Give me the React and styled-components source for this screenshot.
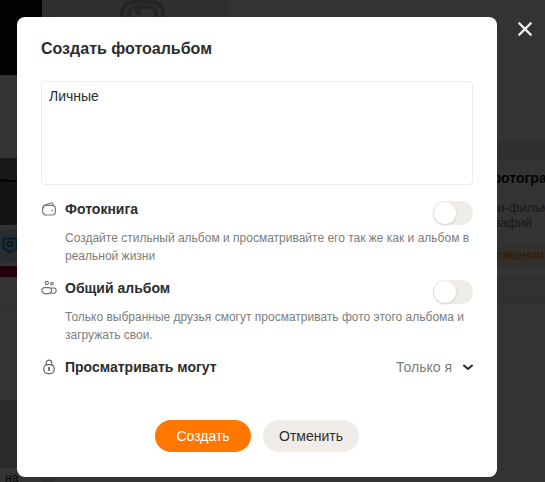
import React from "react";
import styled, { createGlobalStyle } from "styled-components";

const Global = createGlobalStyle`
  html, body {
    margin: 0;
    padding: 0;
    height: 100%;
    overflow: hidden;
    background: #fff;
    font-family: "Liberation Sans", Arial, sans-serif;
  }
  * { box-sizing: border-box; }
`;

const WalletIcon = () => (
  <svg width="16" height="16" viewBox="0 0 16 16" fill="none" stroke="#7d7d7d" strokeWidth="1.2">
    <path d="M2 7.5C2 5.5 2.6 4.6 4 4.1L10 2C11.2 1.6 12 2.3 12 3.4V4.4" />
    <rect x="1.6" y="4.4" width="12.8" height="9.6" rx="3.4" />
    <circle cx="11.2" cy="9.6" r="0.8" fill="#7d7d7d" stroke="none" />
  </svg>
);

const PeopleIcon = () => (
  <svg width="16" height="16" viewBox="0 0 16 16" fill="none" stroke="#6f6f6f" strokeWidth="1.1">
    <circle cx="5.8" cy="3" r="1.6" />
    <circle cx="11" cy="3.6" r="1.3" />
    <rect x="0.8" y="7.6" width="9.8" height="6" rx="3" />
    <path d="M10 8H12.6C14.2 8 15.2 9.2 15.2 10.6C15.2 12.1 14.2 13.2 12.6 13.2H9.4" />
  </svg>
);

const LockIcon = () => (
  <svg width="16" height="16" viewBox="0 0 16 16" fill="none" stroke="#666" strokeWidth="1.2">
    <path d="M5.2 6.6V4C5.2 2.4 6.4 1.2 8 1.2C9.6 1.2 10.8 2.4 10.8 4V6.6" />
    <rect x="2.8" y="5.6" width="10.4" height="9" rx="4" />
    <path d="M8 8.6V11" strokeLinecap="round" strokeWidth="1.8" />
  </svg>
);

const Chevron = () => (
  <svg width="10" height="7" viewBox="0 0 10 7" fill="none" stroke="#2c2d2e" strokeWidth="2" strokeLinecap="round" strokeLinejoin="round">
    <path d="M1 1.6L5 5L9 1.6" />
  </svg>
);

const CloseIcon = () => (
  <svg width="16" height="16" viewBox="0 0 16 16" fill="none" stroke="#eee" strokeWidth="2.2">
    <path d="M1.6 1.6L14.4 14.4M14.4 1.6L1.6 14.4" />
  </svg>
);

const StubIcon = () => (
  <svg width="45" height="30" viewBox="0 0 45 30" fill="none" stroke="#b9b7b4" strokeWidth="4">
    <rect x="2" y="2" width="41" height="44" rx="11" />
    <rect x="9" y="7" width="27" height="30" rx="6" />
    <circle cx="18" cy="12" r="3" fill="#b9b7b4" stroke="none" />
  </svg>
);

const BubbleIcon = () => (
  <svg width="16" height="18" viewBox="0 0 16 18" fill="none" stroke="#1a8fd0" strokeWidth="2">
    <path d="M3 1.5H13C14 1.5 14.5 2 14.5 3V11C14.5 12 14 12.5 13 12.5H11L8 16L5 12.5H3C2 12.5 1.5 12 1.5 11V3C1.5 2 2 1.5 3 1.5Z" />
    <rect x="5.5" y="5" width="5" height="4" />
  </svg>
);

// страница под затемнением
const Page = styled.div`
  position: relative;
  width: 545px;
  height: 482px;
  overflow: hidden;
  display: grid;
  grid-template-columns: 42px 12px 176px 1fr;
  background: #fff;
`;

const LeftColumn = styled.div`
  display: flex;
  flex-direction: column;
  background: #fff;
`;

const Strip = styled.div`
  height: ${(p) => p.$h}px;
  background: ${(p) => p.$bg};
  border-bottom: ${(p) => (p.$line ? "1px solid #e6e4e1" : "0")};
`;

const PostPhoto = styled.div`
  height: 67px;
  background: linear-gradient(4deg, #666 0 62%, #111 63% 65%, #777 66%);
`;

const AvatarRow = styled.div`
  height: 41px;
  background: #fff;
`;

const Avatar = styled.div`
  width: 34px;
  height: 34px;
  margin: 4px 0 0 -7px;
  border-radius: 50%;
  background: #cfe2ee;
  display: flex;
  align-items: center;
  justify-content: center;
`;

const BottomLabel = styled.span`
  display: block;
  font-size: 12px;
  line-height: 14px;
  color: #2c2d2e;
  padding: 3px 0 0 5px;
`;

const Gap = styled.div`
  background: #e9e7e4;
`;

const MiddleColumn = styled.div`
  display: flex;
  flex-direction: column;
`;

const PhotoStub = styled.div`
  height: 150px;
  background: #efedea;
  display: flex;
  justify-content: center;
`;

const RightColumn = styled.div`
  padding-top: 140px;
  display: flex;
  flex-direction: column;
`;

const CardHead = styled.div`
  height: 18px;
  background: #f0eeeb;
`;

const Card = styled.div`
  height: 120px;
  border-top: 1px solid #e6e4e1;
  border-bottom: 1px solid #e6e4e1;
  overflow: hidden;
  white-space: nowrap;
  display: flex;
  flex-direction: column;
  background: #fff;
`;

const CardTitle = styled.div`
  margin-top: 10px;
  margin-bottom: 13px;
  padding-left: 259px;
  font-size: 14px;
  line-height: 18px;
  font-weight: 700;
  color: #111;
`;

const CardLine = styled.div`
  padding-left: ${(p) => p.$left}px;
  font-size: 13px;
  line-height: 15px;
  color: #7d7d7d;
`;

const CardLink = styled.div`
  margin-top: 16px;
  padding: 0 0 0 240px;
  height: 22px;
  font-size: 13px;
  line-height: 17px;
  color: #ee8208;
  background: #fbeadb;
`;

const CardFooter = styled.div`
  height: 26px;
  background: #f4f2f0;
  border-bottom: 1px solid #e6e4e1;
`;

const Overlay = styled.div`
  position: absolute;
  inset: 0;
  background: rgba(0, 0, 0, 0.8);
`;

const CloseButton = styled.button`
  position: absolute;
  top: 21px;
  left: 517px;
  width: 16px;
  height: 16px;
  padding: 0;
  border: 0;
  background: none;
  display: flex;
`;

const Modal = styled.div`
  position: absolute;
  top: 17px;
  left: 17px;
  width: 480px;
  height: 460px;
  background: #fff;
  border-radius: 8px;
  padding: 22px 24px 25px;
  display: flex;
  flex-direction: column;
`;

const Title = styled.h2`
  margin: 0;
  font-size: 16px;
  line-height: 20px;
  font-weight: 700;
  color: #2c2d2e;
`;

const NameField = styled.div`
  margin-top: 22px;
  height: 104px;
  border: 1px solid #eeecea;
  border-radius: 4px;
  padding: 6px 7px;
  font-size: 14px;
  line-height: 16px;
  color: #2c2d2e;
`;

const Option = styled.div`
  margin-top: ${(p) => p.$top}px;
  display: grid;
  grid-template-columns: 24px 1fr 40px;
  align-items: start;
`;

const OptionIcon = styled.span`
  display: flex;
  align-items: center;
  height: 24px;
`;

const OptionTitle = styled.span`
  font-size: 14px;
  line-height: 24px;
  font-weight: 700;
  color: #2c2d2e;
`;

const Hint = styled.p`
  margin: 4px 0 0 24px;
  font-size: 12px;
  line-height: 18px;
  color: #7d7d7d;
`;

const Toggle = styled.span`
  display: block;
  width: 40px;
  height: 24px;
  margin-top: 4px;
  padding: 1px;
  border-radius: 12px;
  background: #f0ece8;
`;

const Knob = styled.span`
  display: block;
  width: 22px;
  height: 22px;
  border-radius: 50%;
  background: #fff;
  box-shadow: 0 1px 3px rgba(0, 0, 0, 0.15);
`;

const PrivacyRow = styled.div`
  margin-top: 11px;
  display: flex;
  align-items: center;
`;

const PrivacyIcon = styled(OptionIcon)`
  width: 24px;
`;

const PrivacyValue = styled.span`
  margin-left: auto;
  display: flex;
  align-items: center;
  gap: 11px;
  font-size: 14px;
  color: #7d7d7d;
`;

const Actions = styled.div`
  margin-top: auto;
  display: flex;
  justify-content: center;
  gap: 12px;
`;

const Button = styled.button`
  width: 96px;
  height: 32px;
  border: 0;
  border-radius: 16px;
  padding: 0;
  font-family: inherit;
  font-size: 14px;
  background: ${(p) => (p.$primary ? "#ff7700" : "#f0ece8")};
  color: ${(p) => (p.$primary ? "#fff" : "#2c2d2e")};
`;

const App = () => (
  <>
    <Global />
    <Page>
      <LeftColumn>
        <Strip $h={75} $bg="#0f0d0a" />
        <Strip $h={83} $bg="#fff" />
        <PostPhoto />
        <AvatarRow>
          <Avatar>
            <BubbleIcon />
          </Avatar>
        </AvatarRow>
        <Strip $h={11} $bg="#a3002f" />
        <Strip $h={29} $bg="#fff" $line />
        <Strip $h={94} $bg="#fff" />
        <Strip $h={68} $bg="#cfcfcf" />
        <BottomLabel>на</BottomLabel>
      </LeftColumn>
      <Gap />
      <MiddleColumn>
        <PhotoStub>
          <StubIcon />
        </PhotoStub>
      </MiddleColumn>
      <RightColumn>
        <CardHead />
        <Card>
          <CardTitle>фотографии</CardTitle>
          <CardLine $left={242}>Мини-фильмы</CardLine>
          <CardLine $left={227}>фотографий</CardLine>
          <CardLink>приложении</CardLink>
        </Card>
        <CardFooter />
      </RightColumn>
      <Overlay />
      <CloseButton aria-label="Закрыть">
        <CloseIcon />
      </CloseButton>
      <Modal>
        <Title>Создать фотоальбом</Title>
        <NameField>Личные</NameField>
        <Option $top={12}>
          <OptionIcon>
            <WalletIcon />
          </OptionIcon>
          <OptionTitle>Фотокнига</OptionTitle>
          <Toggle>
            <Knob />
          </Toggle>
        </Option>
        <Hint>Создайте стильный альбом и просматривайте его так же как и альбом в реальной жизни</Hint>
        <Option $top={11}>
          <OptionIcon>
            <PeopleIcon />
          </OptionIcon>
          <OptionTitle>Общий альбом</OptionTitle>
          <Toggle>
            <Knob />
          </Toggle>
        </Option>
        <Hint>Только выбранные друзья смогут просматривать фото этого альбома и загружать свои.</Hint>
        <PrivacyRow>
          <PrivacyIcon>
            <LockIcon />
          </PrivacyIcon>
          <OptionTitle>Просматривать могут</OptionTitle>
          <PrivacyValue>
            Только я
            <Chevron />
          </PrivacyValue>
        </PrivacyRow>
        <Actions>
          <Button $primary>Создать</Button>
          <Button>Отменить</Button>
        </Actions>
      </Modal>
    </Page>
  </>
);

export default App;
